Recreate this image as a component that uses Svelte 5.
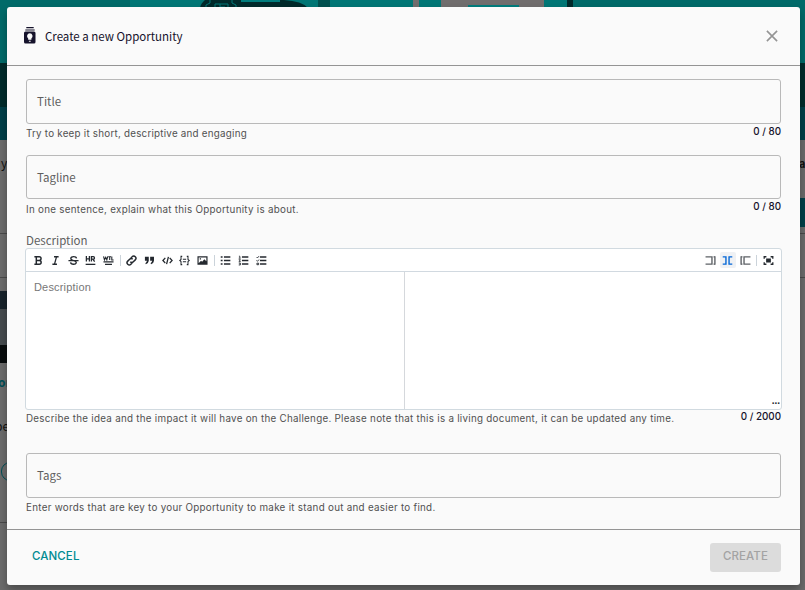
<script>
  const left = ['bold', 'italic', 'strike', 'hr', 'wtl', '|', 'link', 'quote', 'code', 'block', 'image', '|', 'ul', 'ol', 'task'];
  const right = ['writeOnly', 'split', 'previewOnly', '|', 'full'];
</script>

{#snippet glyph(name)}
  <svg class="glyph" viewBox="0 0 12 12" width="12" height="12">
    {#if name === 'bold'}
      <path d="M1.500 1.900h5.300a2 2 0 0 1 0 4H4M6.800 5.900a2.100 2.100 0 0 1 0 4.200H1.500M3.600 2v8M4 5.900h3" stroke-width="1.600" />
    {:else if name === 'italic'}
      <path d="M4.400 1.900h5M2.600 10.100h5M7.100 2 4.900 10" stroke-width="1.400" />
    {:else if name === 'strike'}
      <path d="M.5 6.200h11M9.300 3.600C8.800 1.200 3.100 1 3.100 3.800c0 1.200 1 1.900 3 2.400C8 6.700 9 7.200 9 8.300c0 2.600-5.900 2.400-6.200-.2" stroke-width="1.500" />
    {:else if name === 'hr'}
      <path d="M1.500 1.200v6M4.800 1.200v6M1.500 4.200h3.300M7 7.200V1.800h2a1.300 1.300 0 0 1 0 2.700H7M8.600 4.500l1.900 2.700" stroke-width="1.400" /><path d="M.7 10.200h10.600" stroke-width="1.400" />
    {:else if name === 'wtl'}
      <path d="M.6 1.500l1 3.800L3 2.500l1.200 2.800 1-3.800M5.800 1.900h3M7.300 1.900v3.600M9.600 1.500v3.900h2" stroke-width="1.200" /><path d="M.5 7.400h11M2.200 10.200h7.600" stroke-width="1.300" />
    {:else if name === 'link'}
      <path d="M5.200 3.300 6.700 1.900a2.400 2.400 0 0 1 3.400 3.400L8 7.400a2.300 2.300 0 0 1-3.300 0M6.800 8.700l-1.500 1.400a2.400 2.400 0 0 1-3.400-3.400L4 4.600a2.300 2.300 0 0 1 3.300 0" stroke-width="1.600" />
    {:else if name === 'quote'}
      <path class="solid" d="M1 2h4.200v4.300Q5 9 2 10.200L1.500 9Q3 8 3.200 6.400H1zM6.700 2h4.200v4.300q-.2 2.700-3.200 3.900L7.200 9q1.500-1 1.700-2.600H6.700z" />
    {:else if name === 'code'}
      <path d="M3.600 3.200 1 6l2.600 2.800M8.400 3.200 11 6 8.400 8.800M7 2 5 10" stroke-width="1.400" />
    {:else if name === 'block'}
      <path d="M3.500 1.500H2.200v3.300L.8 6l1.400 1.200v3.300h1.300M8.500 1.500h1.300v3.300L11.200 6 9.800 7.200v3.300H8.500M4.200 4.700h3.600M4.200 7.300h3.600" stroke-width="1.100" />
    {:else if name === 'image'}
      <path class="solid" fill-rule="evenodd" d="M.5 1.400h11v9.200H.5zM1.800 2.700v6.200l2.600-2.600 1.200 1L8 4.700l2.200 2.100V2.700zM3 3.600h1.400V5H3z" />
    {:else if name === 'ul' || name === 'ol' || name === 'task'}
      <path d="M4.300 2.200h7M4.300 6h7M4.300 9.800h7" stroke-width="1.500" />
      {#if name === 'ul'}
        <path d="M.8 2.200h2M.8 6h2M.8 9.800h2" stroke-width="1.700" />
      {:else if name === 'ol'}
        <path d="M1 1.300h1v2.200M.8 3.500h2M.8 5.100h1.800L1.100 7h1.900M.8 8.700h1.800v2.200H.8M1.300 9.800h1.300" stroke-width=".9" />
      {:else}
        <path d="m.6 2.200 1 1L3.200 1.300M.6 5.900l1 1L3.200 5M1 8.900h1.800v1.700H1z" stroke-width="1" />
      {/if}
    {:else if name === 'writeOnly'}
      <path d="M.6 2h7v8h-7M10.800 1.400v9.200" stroke-width="1.500" /><path d="M9.300 2h1.500M9.300 10h1.500" />
    {:else if name === 'split'}
      <path d="M.8 2h3.500v8H.8M11.200 2H7.700v8h3.500" stroke-width="1.500" />
    {:else if name === 'previewOnly'}
      <path d="M11.400 2h-7v8h7M1.200 1.400v9.200" stroke-width="1.500" /><path d="M1.200 2h1.500M1.200 10h1.500" />
    {:else if name === 'full'}
      <path d="M1.300 4.200V1.900h2.400M8.300 1.900h2.400v2.300M10.700 7.800v2.300H8.300M3.700 10.100H1.300V7.800" stroke-width="1.400" /><path class="solid" d="M3.400 3.800h5.200v4.400H3.400z" />
    {/if}
  </svg>
{/snippet}

{#snippet tools(items)}
  {#each items as item}
    {#if item === '|'}
      <i class="divider"></i>
    {:else}
      <button class="tool" class:pane={item === 'writeOnly' || item === 'previewOnly'} class:active={item === 'split'} aria-label={item}>{@render glyph(item)}</button>
    {/if}
  {/each}
{/snippet}

<div class="page">
  <svg class="art" width="805" height="8" viewBox="0 0 805 8">
    <path d="M130 0h437v8H130z" fill="#007675" />
    <path d="M200 8q1-5 5-8h79q18 1 24 8z" fill="#002a2b" />
    <path d="M318 0h12v8h-12z" fill="#00504f" />
    <path d="M206 8v-3l4-2V0M236 8V5l-4-2V0M215 8V4h13v4M220 4v3h5" fill="none" stroke="#007878" />
    <path d="M241 0h39v2h-39z" fill="#007c7c" />
    <path d="M413 0h6v8h-6zM441 0h103v8H441z" fill="#706d6d" />
    <path d="M468 5h51v3h-51z" fill="#007c7c" />
    <path d="M567 0h6v8h-6z" fill="#002a2b" />
  </svg>
  <div class="sliver west">
    <span class="word" style:top="14px" style:left="1px">y</span>
    <i class="rule" style:top="93px"></i>
    <i class="rule" style:top="137px"></i>
    <i class="photo"></i>
    <b class="word teal" style:top="233px" style:left="-2px">or</b>
    <span class="word" style:top="277px" style:left="-5px">be</span>
    <i class="ring"></i>
    <i class="rule" style:top="382px"></i>
  </div>
  <div class="sliver east">
    <b class="word" style:top="14px" style:left="-1px">a</b>
    <i class="bar"></i>
    <i class="rule" style:top="93px"></i>
    <i class="rule" style:top="137px"></i>
  </div>

  <section class="dialog">
    <header>
      <svg class="logo" width="12" height="17" viewBox="0 0 12 17">
        <path d="M2.300.7h7.400M1.300 3h9.400" fill="none" stroke="#15122b" stroke-width="1.200" />
        <rect x="0" y="4.600" width="11.500" height="12" rx="1.500" fill="#15122b" />
        <path d="M5.800 6.300a2.900 2.900 0 0 0-1.600 5.200v1.300h3.200v-1.300a2.900 2.900 0 0 0-1.600-5.200zM4.900 13.700h1.800v1H4.900z" fill="#fafafa" />
      </svg>
      <h1>Create a new Opportunity</h1>
      <svg class="close" width="12" height="12" viewBox="0 0 12 12"><path d="m.9.9 10.200 10.200M11.100.9.900 11.100" fill="none" stroke="#949494" stroke-width="1.600" /></svg>
    </header>

    <main>
      <div class="field title">
        <div class="input">Title</div>
        <div class="notes"><span class="h1">Try to keep it short, descriptive and engaging</span><span class="count">0 / 80</span></div>
      </div>
      <div class="field tagline">
        <div class="input">Tagline</div>
        <div class="notes"><span class="h2">In one sentence, explain what this Opportunity is about.</span><span class="count">0 / 80</span></div>
      </div>
      <div class="label">Description</div>
      <div class="editor">
        <div class="toolbar">
          <div class="group">{@render tools(left)}</div>
          <div class="group views">{@render tools(right)}</div>
        </div>
        <div class="panes">
          <div class="write">Description</div>
          <div class="preview">...</div>
        </div>
      </div>
      <div class="notes desc"><span class="h3">Describe the idea and the impact it will have on the Challenge. Please note that this is a living document, it can be updated any time.</span><span class="count">0 / 2000</span></div>
      <div class="field tags">
        <div class="input">Tags</div>
        <div class="notes"><span class="h4">Enter words that are key to your Opportunity to make it stand out and easier to find.</span></div>
      </div>
    </main>

    <footer>
      <button class="cancel">CANCEL</button>
      <button class="create" disabled>CREATE</button>
    </footer>
  </section>
</div>

<style>
  :global(body) { overflow: hidden; }
  .page, .page * { box-sizing: border-box; }
  .page {
    position: relative; width: 805px; height: 590px; padding: 7px 5px 5px 7px; overflow: hidden;
    background: linear-gradient(#006a69 0 63px, #002b2b 63px 107px, #003f48 107px 140px, #6b6b6b 140px);
    font-family: "Noto Sans CJK SC", sans-serif;
  }
  .art { position: absolute; left: 0; top: 0; }
  .sliver { position: absolute; top: 140px; height: 450px; }
  .west { left: 0; width: 20px; }
  .east { right: 0; width: 5px; }
  .sliver i { position: absolute; }
  .word { position: absolute; font: 12px/18px "Noto Sans CJK SC", sans-serif; color: #111; }
  .east .word { font-weight: 700; font-size: 11px; }
  .word.teal { color: #004e56; font-weight: 700; }
  .rule { left: 0; width: 100%; height: 1px; background: #4a4a4a; }
  .photo { top: 151px; left: 0; width: 7px; height: 72px; background: linear-gradient(#18232b 0 18px, #454b4e 18px 54px, #080c0d 54px); }
  .ring { top: 322px; left: 1px; width: 18px; height: 19px; border: 1px solid #004e56; border-radius: 10px; }
  .bar { top: 58px; left: 0; width: 5px; height: 29px; background: #003f48; }

  .dialog {
    position: relative; display: flex; flex-direction: column; width: 793px; height: 578px;
    background: #fafafa; border-radius: 3px; box-shadow: 0 5px 9px rgba(0, 0, 0, .3);
  }
  header { display: flex; align-items: center; height: 59px; padding: 0 22px 0 17px; border-bottom: 1px solid #949494; }
  .logo { margin-top: -2px; }
  h1 { flex: 1; margin: 0 0 1px 9px; font-size: 11.500px; line-height: 18px; font-weight: 400; color: #15122b; white-space: nowrap; }
  .close { display: block; }

  main { flex: 1; padding: 13px 19px 0 19px; }
  .input { display: flex; align-items: center; height: 45px; padding: 0 10px 1px; border: 1px solid #b9b9b9; border-radius: 3px; font-size: 11.500px; color: #5e5e5e; }
  .tagline .input { height: 44px; padding-bottom: 0; }
  .title { height: 76px; }
  .tagline { height: 78px; }
  .notes { display: flex; justify-content: space-between; height: 19px; font: 400 9.800px/20px Inter, sans-serif; color: #505050; white-space: nowrap; }
  .notes .count { line-height: 15px; font-weight: 500; color: #15122b; }
  .tagline .notes { padding-top: 1px; }
  .tagline .count { line-height: 13px; }
  .h1 { letter-spacing: .237px; }
  .h2 { letter-spacing: .28px; }
  .h3 { letter-spacing: .278px; line-height: 18px; }
  .h4 { letter-spacing: .283px; }
  .label { height: 15px; font-size: 11.500px; line-height: 14px; color: #5e5e5e; }
  .editor { height: 162px; margin: 0 -1px; border: 1px solid #d1dae0; border-radius: 3px; background: #fff; }
  .toolbar { display: flex; justify-content: space-between; height: 23px; padding: 0 5px 0 4px; border-bottom: 1px solid #d1d9e0; }
  .group { display: flex; align-items: center; }
  .tool { display: flex; align-items: center; justify-content: center; width: 16px; height: 16px; margin-right: 1.600px; padding: 0; border: 0; border-radius: 2px; background: none; color: #24292f; }
  .tool.active { background: #eff1f4; color: #0366d6; }
  .tool.pane { color: #5d6166; }
  .group:last-child .tool:last-child { margin-right: 0; }
  .divider { width: 1px; height: 11px; margin: 0 3px 0 2px; background: #cbd3da; }
  .views .divider { margin: 0 3px 0 1px; }
  .glyph { width: 11px; height: 11px; fill: none; stroke: currentColor; stroke-width: 1.200; }
  .glyph .solid { fill: currentColor; stroke: none; }
  .panes { display: flex; height: 137px; }
  .write { width: 379px; padding: 7px 8px; border-right: 1px solid #d5d8dc; font: 11px/16px "Liberation Sans", sans-serif; letter-spacing: .18px; color: #777; }
  .preview { display: flex; flex: 1; align-items: flex-end; justify-content: flex-end; padding: 0 1px 2px 0; font: 700 10px/12px "Liberation Sans", sans-serif; color: #24292f; }
  .desc { height: 43px; }
  .desc .count { line-height: 14px; }

  footer { display: flex; justify-content: space-between; align-items: center; height: 56px; padding: 0 19px 1px 19px; border-top: 1px solid #949494; }
  footer button { height: 29px; border: 0; border-radius: 3px; font: 500 11.500px/27px Inter, sans-serif; }
  .cancel { padding: 0 6px 2px; background: none; color: #008b92; letter-spacing: .1px; }
  .create { width: 71px; padding: 0 0 2px; background: #dcdcdc; color: #a3a3a3; letter-spacing: .1px; }
</style>
